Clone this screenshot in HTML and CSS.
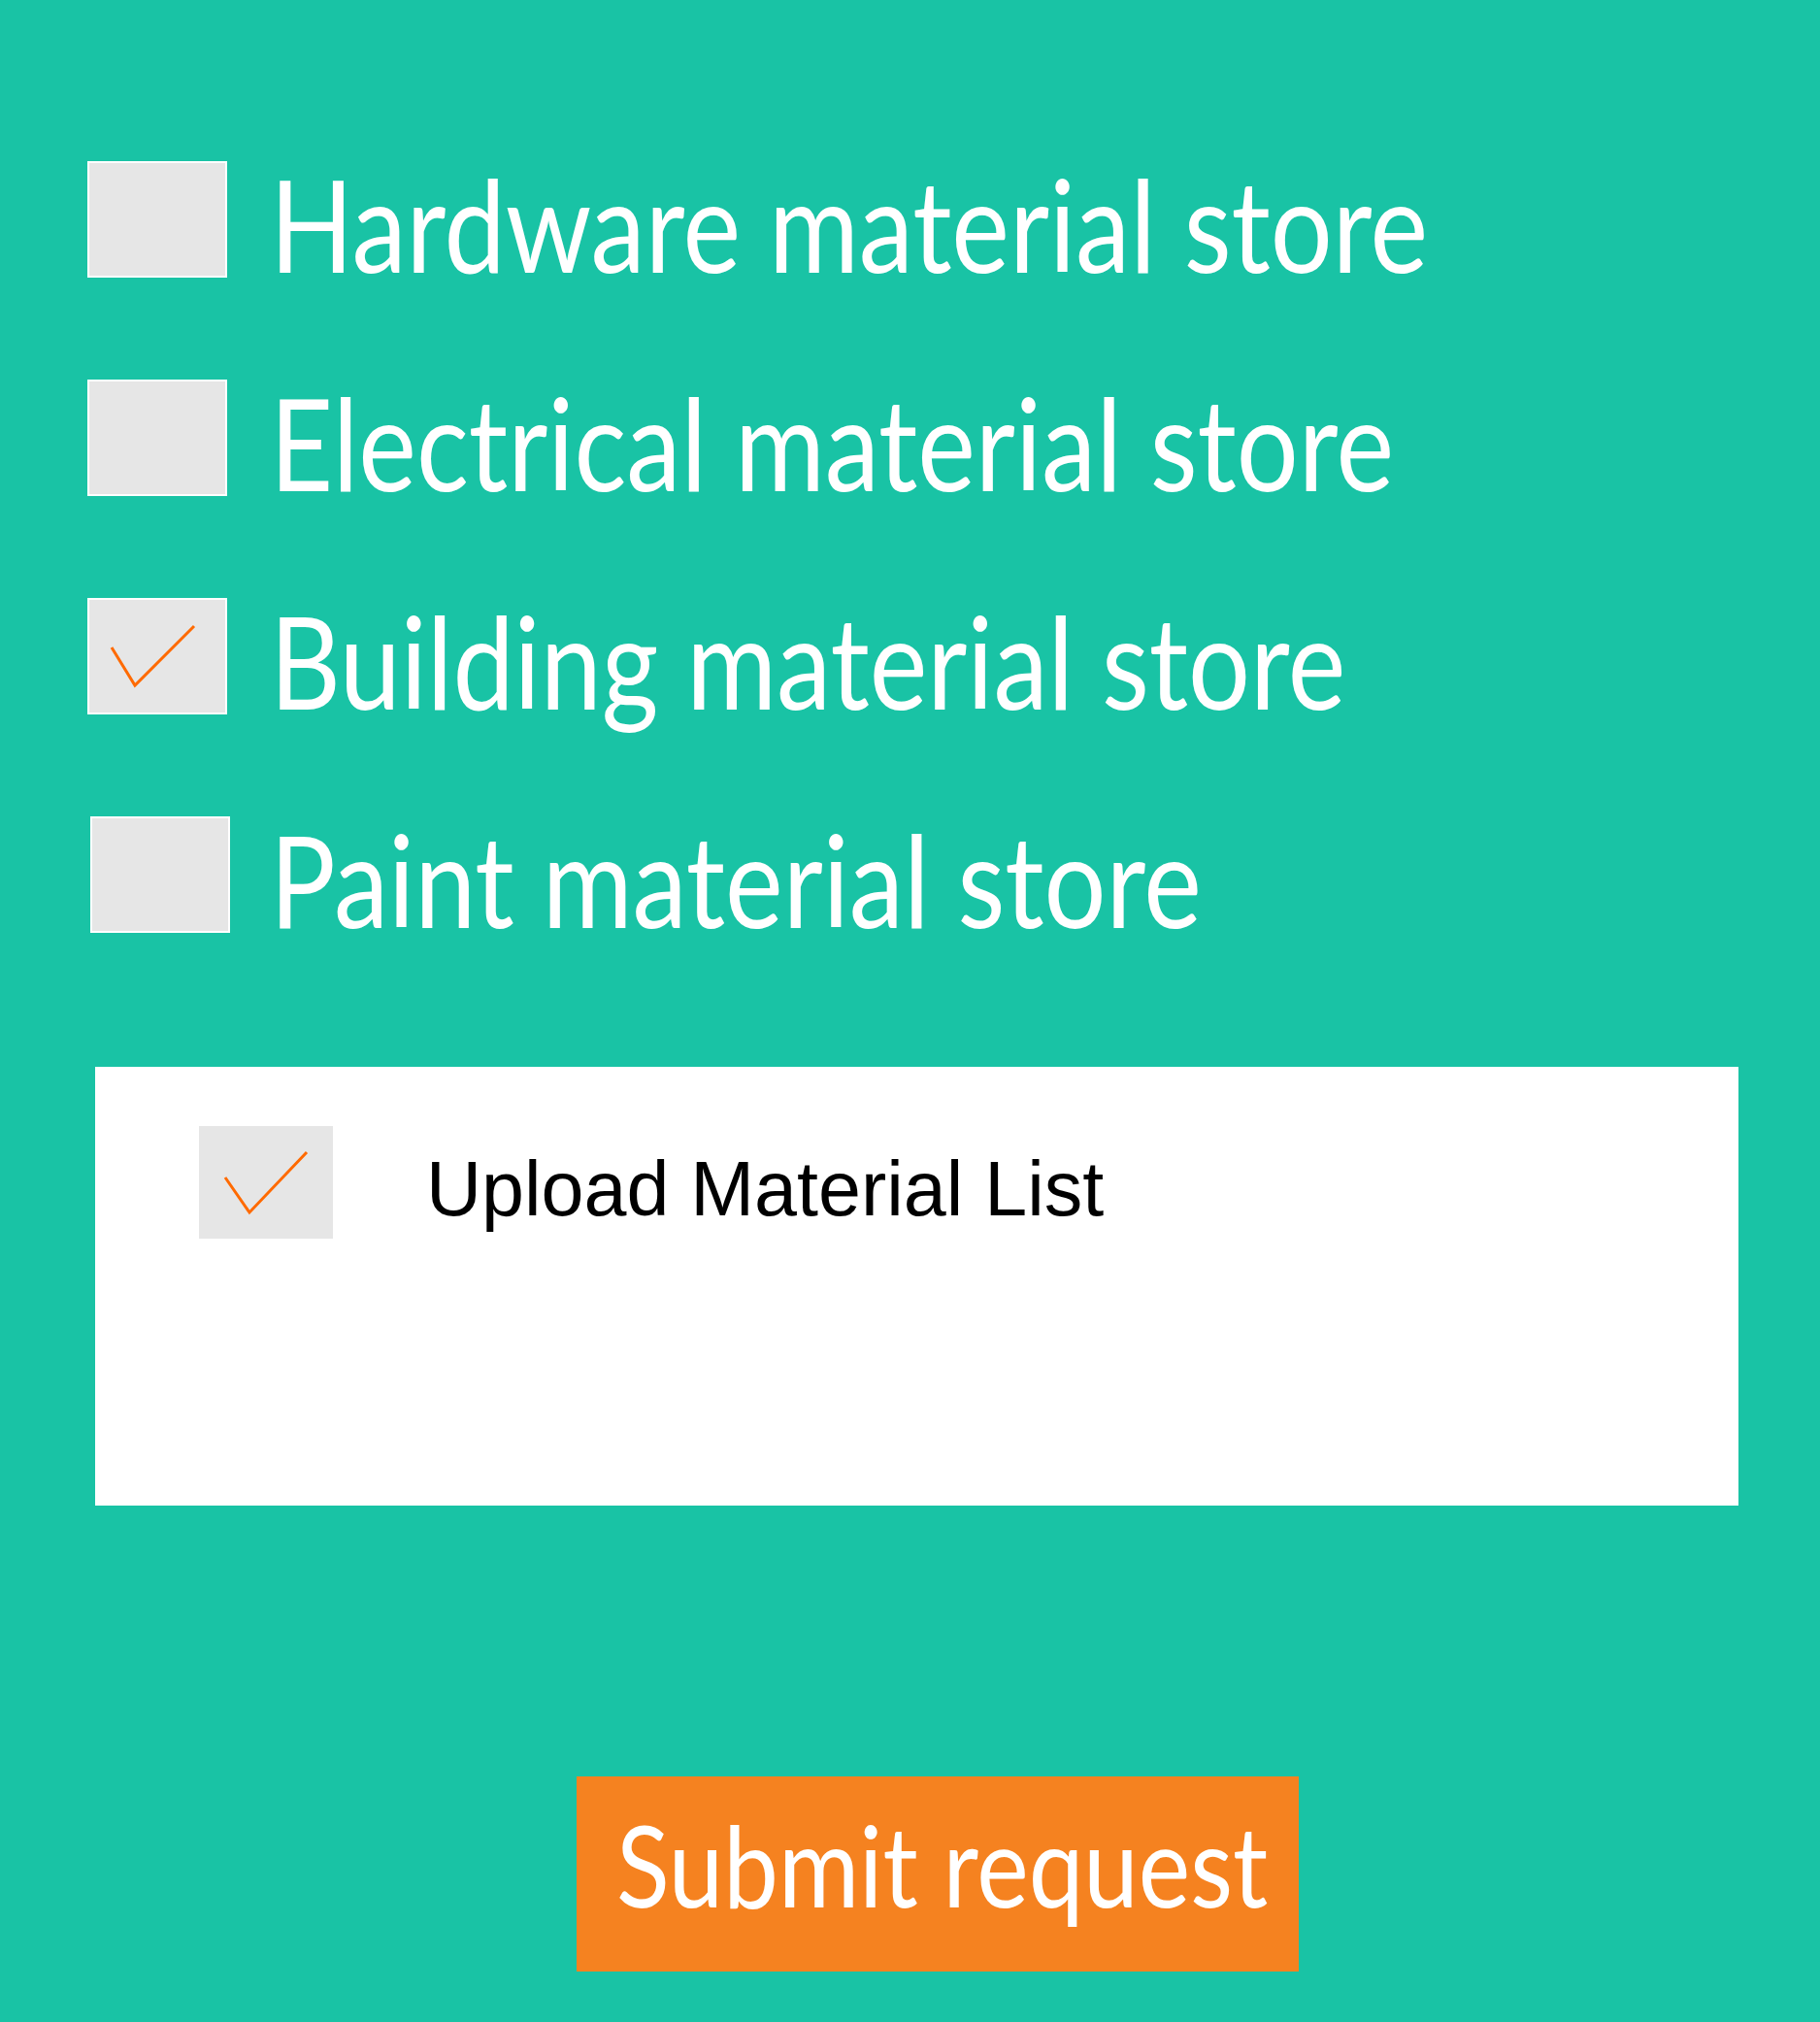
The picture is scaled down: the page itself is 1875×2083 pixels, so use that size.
FILE: index.html
```html
<!DOCTYPE html>
<html lang="en">
<head>
<meta charset="utf-8">
<title>Material request</title>
<link rel="stylesheet" href="styles.css">
</head>
<body>
<main class="page">
  <ul class="options">
    <li class="option">
      <span class="box"></span>
      <span class="label">Hardware material store</span>
    </li>
    <li class="option">
      <span class="box"></span>
      <span class="label">Electrical material store</span>
    </li>
    <li class="option">
      <span class="box">
        <svg class="tick" viewBox="0 0 144 120" width="144" height="120"><polyline points="25,51 49,90 110,29" fill="none" stroke="#ff6a00" stroke-width="3"/></svg>
      </span>
      <span class="label">Building material store</span>
    </li>
    <li class="option option-last">
      <span class="box"></span>
      <span class="label">Paint material store</span>
    </li>
  </ul>

  <section class="panel">
    <div class="upload">
      <span class="ubox">
        <svg class="tick" viewBox="0 0 138 116" width="138" height="116"><polyline points="27,53 52,89 111,27" fill="none" stroke="#ff6a00" stroke-width="3"/></svg>
      </span>
      <span class="ulabel">Upload Material List</span>
    </div>
  </section>

  <div class="actions">
    <button class="submit" type="button"><span class="submit-text">Submit request</span></button>
  </div>
</main>
</body>
</html>
```

FILE: styles.css
```css
html, body {
  margin: 0;
  padding: 0;
}
body {
  background: #19c3a5;
  width: 1875px;
  height: 2083px;
  overflow: hidden;
}
.page {
  padding: 166px 0 0 90px;
}
.options {
  list-style: none;
  margin: 0;
  padding: 0;
  display: flex;
  flex-direction: column;
  gap: 105px;
}
.option {
  display: flex;
  align-items: flex-start;
  gap: 44px;
  height: 120px;
}
.option-last .box {
  margin-left: 3px;
}
.option-last .label {
  margin-left: -3px;
}
.box {
  box-sizing: border-box;
  width: 144px;
  height: 120px;
  background: #e6e6e6;
  border: 2px solid #ffffff;
  flex: none;
  position: relative;
}
.box .tick {
  position: absolute;
  left: -2px;
  top: -2px;
}
.label {
  display: inline-block;
  font-family: Lato, "Open Sans", sans-serif;
  font-size: 132px;
  line-height: 120px;
  height: 120px;
  padding-top: 4px;
  color: #ffffff;
  white-space: nowrap;
  transform: scaleX(0.855);
  transform-origin: left top;
}
.panel {
  margin: 138px 0 0 8px;
  width: 1693px;
  height: 452px;
  background: #ffffff;
  box-sizing: border-box;
  padding: 61px 0 0 107px;
}
.upload {
  display: flex;
  align-items: flex-start;
  gap: 96px;
}
.ubox {
  width: 138px;
  height: 116px;
  background: #e6e6e6;
  flex: none;
  position: relative;
}
.ubox .tick {
  position: absolute;
  left: 0;
  top: 0;
}
.ulabel {
  font-family: "Liberation Sans", Arial, sans-serif;
  font-size: 79px;
  line-height: 116px;
  padding-top: 7px;
  color: #000000;
  white-space: nowrap;
}
.actions {
  margin: 279px 0 0 504px;
}
.submit {
  display: flex;
  align-items: flex-start;
  width: 744px;
  height: 201px;
  border: 0;
  margin: 0;
  padding: 0 0 0 41px;
  background: #f58220;
  cursor: pointer;
}
.submit-text {
  display: block;
  font-family: Lato, "Open Sans", sans-serif;
  font-size: 116px;
  line-height: 181px;
  color: #ffffff;
  white-space: nowrap;
  transform: scaleX(0.872);
  transform-origin: left top;
}
```
